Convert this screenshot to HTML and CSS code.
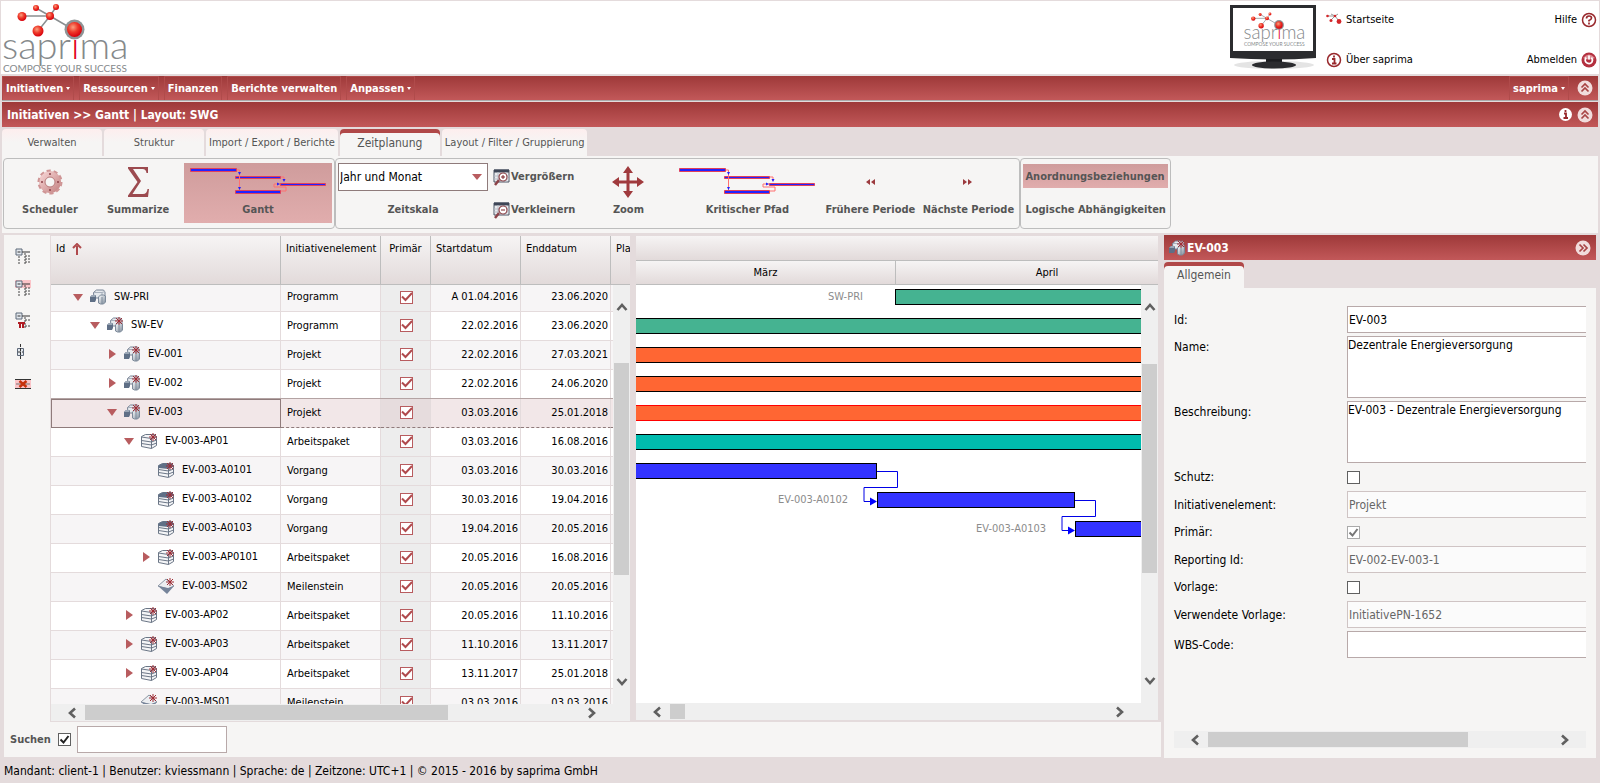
FILE: index.html
```html
<!DOCTYPE html>
<html lang="de">
<head>
<meta charset="utf-8">
<title>saprima</title>
<link rel="stylesheet" href="styles.css">
</head>
<body>
<svg class="defs" aria-hidden="true">
<defs>
<radialGradient id="ball" cx="40%" cy="35%" r="65%"><stop offset="0" stop-color="#f9a080"/><stop offset=".5" stop-color="#ee3a2a"/><stop offset="1" stop-color="#d8000c"/></radialGradient>
<linearGradient id="steel" x1="0" y1="0" x2="1" y2="1"><stop offset="0" stop-color="#fff"/><stop offset="1" stop-color="#7d8a9a"/></linearGradient>
<linearGradient id="gearfill" x1="0" y1="0" x2="1" y2="1"><stop offset="0" stop-color="#f3cfcf"/><stop offset="1" stop-color="#c98a8a"/></linearGradient>
</defs>
<symbol id="star" viewBox="0 0 8 8"><path d="M4 0v8M0 4h8M1 1l6 6M7 1L1 7" stroke="#a02c35" stroke-width="1"/></symbol>
<symbol id="cubes0" viewBox="0 0 16 16">
<path d="M3.500 3.500l3-2.500h7l1.500 2v4l-2 2H4z" fill="#e6e9ed" stroke="#768294"/><path d="M4 3.500h8l3-1M12 3.500V8" fill="none" stroke="#a8b0bc"/>
<path d="M0 8l2-2h4v5l-1 2H0z" fill="#5f6f86"/><path d="M0 8l2-2h4l-1 2z" fill="#9aa6b5"/>
<path d="M8.500 8l2-2h3l2 1v6l-2 2h-3l-2-1z" fill="url(#steel)" stroke="#7d8a9a"/><path d="M12 8v7" stroke="#7d8a9a"/>
</symbol>
<symbol id="cubes" viewBox="0 0 16 16"><use href="#cubes0" width="16" height="16"/><use href="#star" x="8" y="0" width="8" height="8"/></symbol>
<symbol id="stack" viewBox="0 0 16 16">
<path d="M.5 3.500l4-2h9l2 2v9l-5 3-10-2z" fill="#f4f5f7" stroke="#6b7686"/>
<path d="M.5 4l10 1.500 5-2M.5 7.500l10 1.500 5-2M.5 10.500l10 1.500 5-2M10.500 5.500v10" fill="none" stroke="#6b7686"/>
<use href="#star" x="8" y="0" width="8" height="8"/>
</symbol>
<symbol id="task" viewBox="0 0 16 16">
<path d="M.5 3.500l4-2h9l2 2v9l-5 3-10-2z" fill="#f4f5f7" stroke="#6b7686"/>
<path d="M.5 3.500l4-2h9l2 2v1l-5 2.500-10-1z" fill="#5f6f86"/>
<path d="M.5 7.500l10 1.500 5-2M.5 10.500l10 1.500 5-2M10.500 7v8" fill="none" stroke="#6b7686"/>
<use href="#star" x="8" y="0" width="8" height="8"/>
</symbol>
<symbol id="stone" viewBox="0 0 16 16">
<path d="M0 8l8-7 8 7-6 3z" fill="#eceef1" stroke="#8c96a4"/><path d="M0 8l10 2 6-2-7 8z" fill="#76849a"/>
<use href="#star" x="8" y="0" width="8" height="8"/>
</symbol>
<symbol id="open" viewBox="0 0 16 16"><path d="M3 5h10l-5 7z" fill="#b85c5f"/></symbol>
<symbol id="shut" viewBox="0 0 16 16"><path d="M5 3l7 5-7 5z" fill="#b85c5f"/></symbol>
<symbol id="chev" viewBox="0 0 12 12"><path d="M1.500 9L6 4l4.500 5" fill="none" stroke="#606060" stroke-width="2.600"/></symbol>
<symbol id="fold" viewBox="0 0 16 16"><circle cx="8" cy="8" r="7.500" fill="#f1dcdc"/><path d="M4.500 7.500L8 4l3.500 3.500M4.500 11.500L8 8l3.500 3.500" fill="none" stroke="#a84444" stroke-width="1.700"/></symbol>
<symbol id="chart" viewBox="0 0 136 28">
<g fill="#2222ff" stroke="#e0405a"><path d="M.5 1.500h46v3H.5zM45.500 9.500h45v2h-45zM45.500 23.500h45v3h-45zM90.500 16.500h45v2h-45z"/></g>
<path d="M47 3h2.500v20M91 10h3v4M84 20v-3h6M84 20h12v4h-5" fill="none" stroke="#ff7070"/>
<path d="M48 5h3l-1.500 3zM48 20h3l-1.500 3zM92.500 12h3L94 15zM87 15.500v3l3-1.500z" fill="#2222ff"/>
</symbol>
<symbol id="lens" viewBox="0 0 18 17">
<path d="M1 1h15v12H1z" fill="#e9ebee" stroke="#4d5666"/><path d="M1 2h15" stroke="#3e4657" stroke-width="3"/><path d="M1 7h15M1 10h15M5 3v10M9 3v10M13 3v10" stroke="#b9bec8"/>
<circle cx="10" cy="8" r="4" fill="#fff" stroke="#8c4248" stroke-width="1.200"/><path d="M6 11l-4 5" stroke="#8c4248" stroke-width="2.500"/>
</symbol>
</svg>

<div class="page">
<header class="top">
<svg class="logo" viewBox="0 0 128 72">
<g id="logo">
<path d="M21 15h28M49 15L35 7M49 15l6-9M49 15L37 30M49 15l24 14" stroke="#8a8e90" stroke-width="1.500"/>
<text x="1" y="58" class="logo-name">sapr<tspan fill="#e2001a">i</tspan>ma</text>
<text x="2" y="71" class="logo-sub">COMPOSE YOUR SUCCESS</text>
<circle cx="73.500" cy="28.500" r="10" fill="#8f9496"/><circle cx="73.500" cy="28.500" r="7.500" fill="url(#ball)"/>
<circle cx="21" cy="15.500" r="4.500" fill="url(#ball)"/><circle cx="35" cy="7" r="3" fill="url(#ball)"/><circle cx="55" cy="6" r="3" fill="url(#ball)"/>
<circle cx="49" cy="15" r="4" fill="url(#ball)"/><circle cx="37" cy="30" r="5.500" fill="url(#ball)"/>
</g>
</svg>
<svg class="screen" viewBox="0 0 90 66" aria-hidden="true">
<ellipse cx="45" cy="61" rx="40" ry="4" fill="#e4e4e4"/>
<path d="M1 1h86v53q-43 3-86 0z" fill="#2b2c2f"/><path d="M4 4h80v43H4z" fill="#fff"/>
<path d="M37 55h16v4h-16z" fill="#1c1d20"/><ellipse cx="45" cy="61" rx="22" ry="3.500" fill="#2b2c2f"/>
<use href="#logo" transform="translate(14 7) scale(.49)"/>
</svg>
<nav class="toplinks">
<a href="#"><svg width="16" height="16" viewBox="0 0 16 16"><path d="M1 4h8l4 5M9 4l3-2M9 4L5 8M9 4L5 2" stroke="#999" fill="none"/><g fill="#d3262a"><circle cx="1.500" cy="4" r="1.300"/><circle cx="9" cy="4" r="1.300"/><circle cx="5" cy="8.500" r="1.500"/><circle cx="13" cy="9.500" r="2.400"/></g></svg>Startseite</a>
<a href="#"><svg width="16" height="16" viewBox="0 0 16 16"><circle cx="8" cy="8" r="6.500" fill="#fff" stroke="#98282c" stroke-width="1.500"/><path d="M8 3.500v2M6 7h2.500v4.500M6 11.500h4.500" stroke="#98282c" stroke-width="1.800" fill="none"/></svg>Über saprima</a>
</nav>
<nav class="toplinks right">
<a href="#">Hilfe<svg width="16" height="16" viewBox="0 0 16 16"><circle cx="8" cy="8" r="6.500" fill="#fff" stroke="#98282c" stroke-width="1.500"/><path d="M5.500 6.500q0-2.500 2.500-2.500t2.500 2q0 1.500-2.500 2.500v1M8 10.500v2" stroke="#98282c" stroke-width="1.700" fill="none"/></svg></a>
<a href="#">Abmelden<svg width="16" height="16" viewBox="0 0 16 16"><circle cx="8" cy="8" r="7.500" fill="#b3303f"/><path d="M2 6q6-7 12 0-6 3-12 0z" fill="#dc8d95"/><path d="M5 5.500q-2 4 1 5.500t5-1q1-2.500-.5-4.500M8 3.500v4" stroke="#fff" stroke-width="1.700" fill="none"/></svg></a>
</nav>
</header>

<nav class="menu">
<a href="#" class="drop">Initiativen</a>
<a href="#" class="drop">Ressourcen</a>
<a href="#">Finanzen</a>
<a href="#">Berichte verwalten</a>
<a href="#" class="drop">Anpassen</a>
<a href="#" class="drop user">saprima</a>
<button class="round" aria-label="Einklappen"><svg width="16" height="16"><use href="#fold"/></svg></button>
</nav>

<div class="bar title">
<h1>Initiativen &gt;&gt; Gantt | Layout: SWG</h1>
<svg class="info" width="13" height="13" viewBox="0 0 13 13"><circle cx="6.500" cy="6.500" r="6.500" fill="#fff"/><path d="M6.500 2v2M5 5.500h2v4.500M4.500 10h4.500" stroke="#98282c" stroke-width="1.800" fill="none"/></svg>
<button class="round" aria-label="Einklappen"><svg width="16" height="16"><use href="#fold"/></svg></button>
</div>

<div class="tabs">
<a href="#" class="tab">Verwalten</a>
<a href="#" class="tab">Struktur</a>
<a href="#" class="tab wide">Import / Export / Berichte</a>
<a href="#" class="tab active">Zeitplanung</a>
<a href="#" class="tab wide">Layout / Filter / Gruppierung</a>
</div>

<div class="ribbon">
<div class="group">
<button class="tool std"><svg width="26" height="34" viewBox="0 0 26 34"><circle cx="13" cy="17" r="8" fill="none" stroke="url(#gearfill)" stroke-width="6"/><circle cx="13" cy="17" r="11.500" fill="none" stroke="#cf9595" stroke-width="2" stroke-dasharray="4.200 3"/><circle cx="13" cy="17" r="5" fill="#f6f5f4" stroke="#b87878"/><g fill="#8c4248"><circle cx="13" cy="9" r="1"/><circle cx="13" cy="25" r="1"/><circle cx="5" cy="17" r="1"/><circle cx="21" cy="17" r="1"/></g></svg>Scheduler</button>
<button class="tool std"><svg width="22" height="34" viewBox="0 0 22 34"><path d="M1 2h20v6h-1.500q-.5-4-4-4H6l8 12-8.500 13H16q4 0 4.500-5H22l-1 8H1v-1.500L10.500 17 1 3.500z" fill="#9c4a4f"/></svg>Summarize</button>
<button class="tool chart on"><svg width="136" height="34" viewBox="0 0 136 34"><use href="#chart" y="2" width="136" height="28"/></svg>Gantt</button>
</div>
<div class="group">
<div class="scale">
<select id="scale"><option>Jahr und Monat</option></select>
<label for="scale">Zeitskala</label>
</div>
<div class="pair">
<button><svg width="18" height="17"><use href="#lens"/><path d="M8 8h4M10 6v4" stroke="#7a2026"/></svg>Vergrößern</button>
<button><svg width="18" height="17"><use href="#lens"/><path d="M8 8h4" stroke="#7a2026"/></svg>Verkleinern</button>
</div>
<button class="tool zoom"><svg width="34" height="34" viewBox="0 0 34 34"><path d="M17 1l5 7h-3.500v7.500H26V12l7 5-7 5v-3.500h-7.500V26H22l-5 7-5-7h3.500v-7.500H8V22l-7-5 7-5v3.500h7.500V8H12z" fill="#a03a3d"/></svg>Zoom</button>
<button class="tool chart"><svg width="136" height="34" viewBox="0 0 136 34"><use href="#chart" y="2" width="136" height="28"/></svg>Kritischer Pfad</button>
<button class="tool step"><svg width="10" height="34" viewBox="0 0 10 34"><path d="M5 14v6l-4-3zM10 14v6l-4-3z" fill="#9c3a3e"/></svg>Frühere Periode</button>
<button class="tool step"><svg width="10" height="34" viewBox="0 0 10 34"><path d="M0 14v6l4-3zM5 14v6l4-3z" fill="#9c3a3e"/></svg>Nächste Periode</button>
</div>
<div class="group last">
<div class="pair">
<button class="on">Anordnungsbeziehungen</button>
<button>Logische Abhängigkeiten</button>
</div>
</div>
</div>

<div class="main">
<section class="work">
<div class="panes">
<div class="strip">
<button aria-label="Ebene reduzieren"><svg width="16" height="16" viewBox="0 0 16 16"><path d="M1 1h6v6H1z" fill="#e3e8ee" stroke="#5d6878"/><path d="M2.500 4h3M7 4h8" stroke="#333"/><path d="M4 8v8M10 5v11M10 8h5M10 11h5M10 14h5" stroke="#444" stroke-dasharray="2 1"/></svg></button>
<button aria-label="Ast reduzieren"><svg width="16" height="16" viewBox="0 0 16 16"><path d="M0 0h16v8H0z" fill="#fbc4c8"/><path d="M1 1h6v6H1z" fill="#e3e8ee" stroke="#5d6878"/><path d="M2.500 4h3M7 4h8" stroke="#333"/><path d="M4 8v8M10 5v11M10 8h5M10 11h5M10 14h5" stroke="#444" stroke-dasharray="2 1"/></svg></button>
<button aria-label="Ast entfernen"><svg width="16" height="16" viewBox="0 0 16 16"><path d="M1 1h6v6H1z" fill="#e3e8ee" stroke="#5d6878"/><path d="M2.500 4h3M7 4h8" stroke="#333"/><path d="M10 5v11M10 8h5M10 14h5" stroke="#444" stroke-dasharray="2 1"/><path d="M3 11h7M5 11v5M8 11v5" stroke="#b01c24" stroke-width="2"/></svg></button>
<button aria-label="Erweitern"><svg width="16" height="16" viewBox="0 0 16 16"><path d="M2.500 4.500h6v7h-6z" fill="#e3e8ee" stroke="#5d6878"/><path d="M5.500 0v16M3 8h5" stroke="#333" stroke-dasharray="3 1"/></svg></button>
<button aria-label="Zeile entfernen"><svg width="16" height="16" viewBox="0 0 16 16"><path d="M0 3h16v10H0z" fill="#fbc4c8"/><path d="M0 3.500h16M0 12.500h16" stroke="#333"/><path d="M1 8h14" stroke="#777"/><path d="M4.500 5l7 6M11.500 5l-7 6" stroke="#c6300c" stroke-width="2.500"/></svg></button>
</div>

<div class="grid">
<div class="grid-view">
<div class="grid-rows">
<table>
<colgroup><col class="c-id"><col class="c-type"><col class="c-prim"><col class="c-date"><col class="c-date"><col></colgroup>
<thead>
<tr><th>Id <svg class="sort" width="10" height="12" viewBox="0 0 10 12"><path d="M5 12V3M1 5l4-4 4 4" fill="none" stroke="#b04a4d" stroke-width="2"/></svg></th><th>Initiativenelement</th><th class="mid">Primär</th><th>Startdatum</th><th>Enddatum</th><th>Pla</th></tr>
</thead>
<tbody>
<tr><td><div class="node lv0"><svg><use href="#open"/></svg><svg><use href="#cubes0"/></svg>SW-PRI</div></td><td>Programm</td><td class="prim"><input type="checkbox" checked aria-label="Primär"></td><td class="date">A 01.04.2016</td><td class="date">23.06.2020</td><td></td></tr>
<tr><td><div class="node lv1"><svg><use href="#open"/></svg><svg><use href="#cubes"/></svg>SW-EV</div></td><td>Programm</td><td class="prim"><input type="checkbox" checked aria-label="Primär"></td><td class="date">22.02.2016</td><td class="date">23.06.2020</td><td></td></tr>
<tr><td><div class="node lv2"><svg><use href="#shut"/></svg><svg><use href="#cubes"/></svg>EV-001</div></td><td>Projekt</td><td class="prim"><input type="checkbox" checked aria-label="Primär"></td><td class="date">22.02.2016</td><td class="date">27.03.2021</td><td></td></tr>
<tr><td><div class="node lv2"><svg><use href="#shut"/></svg><svg><use href="#cubes"/></svg>EV-002</div></td><td>Projekt</td><td class="prim"><input type="checkbox" checked aria-label="Primär"></td><td class="date">22.02.2016</td><td class="date">24.06.2020</td><td></td></tr>
<tr class="selected"><td><div class="node lv2"><svg><use href="#open"/></svg><svg><use href="#cubes"/></svg>EV-003</div></td><td>Projekt</td><td class="prim"><input type="checkbox" checked aria-label="Primär"></td><td class="date">03.03.2016</td><td class="date">25.01.2018</td><td></td></tr>
<tr><td><div class="node lv3"><svg><use href="#open"/></svg><svg><use href="#stack"/></svg>EV-003-AP01</div></td><td>Arbeitspaket</td><td class="prim"><input type="checkbox" checked aria-label="Primär"></td><td class="date">03.03.2016</td><td class="date">16.08.2016</td><td></td></tr>
<tr><td><div class="node lv4"><svg></svg><svg><use href="#task"/></svg>EV-003-A0101</div></td><td>Vorgang</td><td class="prim"><input type="checkbox" checked aria-label="Primär"></td><td class="date">03.03.2016</td><td class="date">30.03.2016</td><td></td></tr>
<tr><td><div class="node lv4"><svg></svg><svg><use href="#task"/></svg>EV-003-A0102</div></td><td>Vorgang</td><td class="prim"><input type="checkbox" checked aria-label="Primär"></td><td class="date">30.03.2016</td><td class="date">19.04.2016</td><td></td></tr>
<tr><td><div class="node lv4"><svg></svg><svg><use href="#task"/></svg>EV-003-A0103</div></td><td>Vorgang</td><td class="prim"><input type="checkbox" checked aria-label="Primär"></td><td class="date">19.04.2016</td><td class="date">20.05.2016</td><td></td></tr>
<tr><td><div class="node lv4"><svg><use href="#shut"/></svg><svg><use href="#stack"/></svg>EV-003-AP0101</div></td><td>Arbeitspaket</td><td class="prim"><input type="checkbox" checked aria-label="Primär"></td><td class="date">20.05.2016</td><td class="date">16.08.2016</td><td></td></tr>
<tr><td><div class="node lv4"><svg></svg><svg><use href="#stone"/></svg>EV-003-MS02</div></td><td>Meilenstein</td><td class="prim"><input type="checkbox" checked aria-label="Primär"></td><td class="date">20.05.2016</td><td class="date">20.05.2016</td><td></td></tr>
<tr><td><div class="node lv3"><svg><use href="#shut"/></svg><svg><use href="#stack"/></svg>EV-003-AP02</div></td><td>Arbeitspaket</td><td class="prim"><input type="checkbox" checked aria-label="Primär"></td><td class="date">20.05.2016</td><td class="date">11.10.2016</td><td></td></tr>
<tr><td><div class="node lv3"><svg><use href="#shut"/></svg><svg><use href="#stack"/></svg>EV-003-AP03</div></td><td>Arbeitspaket</td><td class="prim"><input type="checkbox" checked aria-label="Primär"></td><td class="date">11.10.2016</td><td class="date">13.11.2017</td><td></td></tr>
<tr><td><div class="node lv3"><svg><use href="#shut"/></svg><svg><use href="#stack"/></svg>EV-003-AP04</div></td><td>Arbeitspaket</td><td class="prim"><input type="checkbox" checked aria-label="Primär"></td><td class="date">13.11.2017</td><td class="date">25.01.2018</td><td></td></tr>
<tr><td><div class="node lv3"><svg></svg><svg><use href="#stone"/></svg>EV-003-MS01</div></td><td>Meilenstein</td><td class="prim"><input type="checkbox" checked aria-label="Primär"></td><td class="date">03.03.2016</td><td class="date">03.03.2016</td><td></td></tr>
</tbody>
</table>
</div>
<div class="vscroll"><svg class="up"><use href="#chev"/></svg><div class="track"><div class="thumb" style="margin-top:50px;height:212px"></div></div><svg class="down"><use href="#chev"/></svg></div>
</div>
<div class="hscroll"><svg class="left"><use href="#chev"/></svg><div class="track"><div class="thumb" style="margin-left:7px;width:363px"></div></div><svg class="rightarrow"><use href="#chev"/></svg></div>
</div>

<div class="gantt">
<div class="years"></div>
<div class="months"><div class="month march">März</div><div class="month april">April</div></div>
<div class="gantt-view">
<div class="canvas">
<span class="tasklabel" style="top:4px;left:192px">SW-PRI</span>
<div class="task program" style="top:4px;left:259px;width:900px"></div>
<div class="task program" style="top:33px;left:-10px;width:1200px"></div>
<div class="task project" style="top:62px;left:-10px;width:1200px"></div>
<div class="task project" style="top:91px;left:-10px;width:1200px"></div>
<div class="task project marked" style="top:120px;left:-10px;width:1200px"></div>
<div class="task package" style="top:149px;left:-10px;width:1200px"></div>
<div class="task work-item" style="top:178px;left:-10px;width:251px"></div>
<span class="tasklabel" style="top:207px;left:142px">EV-003-A0102</span>
<div class="task work-item" style="top:207px;left:241px;width:198px"></div>
<span class="tasklabel" style="top:236px;left:340px">EV-003-A0103</span>
<div class="task work-item" style="top:236px;left:439px;width:900px"></div>
<svg class="links" width="505" height="300"><g fill="none" stroke="#0000e6"><path d="M241 186.500h20.500v16h-33.500v14h8"/><path d="M439 215.500h20.500v16h-33.500v14h8"/></g><path d="M234 212.500l7 4-7 4zM432 241.500l7 4-7 4z" fill="#0000ff"/></svg>
</div>
<div class="vscroll"><svg class="up"><use href="#chev"/></svg><div class="track"><div class="thumb" style="margin-top:51px;height:209px"></div></div><svg class="down"><use href="#chev"/></svg></div>
</div>
<div class="hscroll"><svg class="left"><use href="#chev"/></svg><div class="track"><div class="thumb" style="margin-left:7px;width:15px"></div></div><svg class="rightarrow"><use href="#chev"/></svg></div>
</div>
</div>

<div class="search">
<label for="searchon">Suchen</label>
<input type="checkbox" id="searchon" class="box" checked>
<input type="text" class="field" aria-label="Suchbegriff">
</div>
</section>

<aside class="detail">
<div class="bar">
<svg width="16" height="16"><use href="#cubes"/></svg>
<h2>EV-003</h2>
<button class="round turn" aria-label="Schließen"><svg width="16" height="16"><use href="#fold"/></svg></button>
</div>
<div class="tabs"><a href="#" class="tab active small">Allgemein</a></div>
<div class="detail-body">
<form>
<label for="f-id">Id:</label><input id="f-id" class="field" type="text" value="EV-003">
<label for="f-name" class="high">Name:</label><textarea id="f-name" class="field">Dezentrale Energieversorgung</textarea>
<label for="f-desc" class="high">Beschreibung:</label><textarea id="f-desc" class="field">EV-003 - Dezentrale Energieversorgung</textarea>
<label for="f-lock">Schutz:</label><input id="f-lock" class="box" type="checkbox">
<label for="f-type">Initiativenelement:</label><input id="f-type" class="field" type="text" value="Projekt" disabled>
<label for="f-prim">Primär:</label><input id="f-prim" class="box" type="checkbox" checked disabled>
<label for="f-rep">Reporting Id:</label><input id="f-rep" class="field" type="text" value="EV-002-EV-003-1" disabled>
<label for="f-tpl">Vorlage:</label><input id="f-tpl" class="box" type="checkbox">
<label for="f-used">Verwendete Vorlage:</label><input id="f-used" class="field" type="text" value="InitiativePN-1652" disabled>
<label for="f-wbs">WBS-Code:</label><input id="f-wbs" class="field" type="text">
</form>
<div class="hscroll"><svg class="left"><use href="#chev"/></svg><div class="track"><div class="thumb" style="margin-left:7px;width:260px"></div></div><svg class="rightarrow"><use href="#chev"/></svg></div>
</div>
</aside>
</div>

<footer>Mandant: client-1 | Benutzer: kviessmann | Sprache: de | Zeitzone: UTC+1 | © 2015 - 2016 by saprima GmbH</footer>
</div>
</body>
</html>
```
FILE: styles.css
```css
*{
box-sizing: border-box;
}
body{
margin: 0;
background: #e4dbdc;
color: #000;
font: 11px/14px "DejaVu Sans Condensed", "Noto Sans", sans-serif;
}
a{
color: inherit;
text-decoration: none;
}
button{
font: inherit;
color: inherit;
padding: 0;
border: 0;
background: none;
cursor: pointer;
}
svg{
display: block;
flex: none;
}
.defs{
position: absolute;
width: 0;
height: 0;
}
.page{
display: flex;
flex-direction: column;
height: 100vh;
min-height: 640px;
padding: 1px 2px 0;
}

/* header */
.top{
display: flex;
flex: none;
height: 73px;
background: #fff;
margin: 0 -1px 2px;
}
.logo{
width: 128px;
height: 72px;
overflow: visible;
}
.logo-name{
font: 300 38px Lato, "Liberation Sans", sans-serif;
fill: #85898b;
}
.logo-sub{
font: 10px Lato, "Liberation Sans", sans-serif;
fill: #85898b;
}
.screen{
width: 90px;
height: 66px;
margin: 3px 7px 0 auto;
}
.toplinks{
display: flex;
flex-direction: column;
gap: 24px;
width: 91px;
padding-top: 11px;
white-space: nowrap;
}
.toplinks a{
display: flex;
align-items: center;
gap: 4px;
height: 16px;
}
.toplinks.right{
width: 180px;
margin-right: 2px;
align-items: flex-end;
}

/* red bars */
.menu,
.bar{
display: flex;
align-items: center;
flex: none;
height: 25px;
background: linear-gradient(#9e3939, #c25859);
color: #fff;
font-weight: bold;
}
.menu{
gap: 5px;
border-bottom: 1px solid #aaa;
margin-bottom: 1px;
}
.menu a{
display: flex;
align-items: center;
gap: 3px;
height: 24px;
padding: 0 3px;
border: 1px solid #b04b4b;
border-width: 1px 1px 0;
}
.menu .drop::after{
content: '';
border: 2px solid transparent;
border-top: 3px solid #fff;
border-bottom: 0;
}
.menu .user{
margin-left: auto;
}
.round{
margin: 0 5px 0 3px;
}
.turn{
transform: rotate(90deg);
}
h1,
h2{
margin: 0;
font-size: 12px;
}
.title h1{
padding-left: 5px;
flex: 1;
}
.title .info{
margin-right: 2px;
}

/* tabs */
.tabs{
display: flex;
flex: none;
gap: 2px;
height: 27px;
margin-top: 2px;
}
.tab{
display: flex;
align-items: center;
justify-content: center;
width: 100px;
color: #555;
background: linear-gradient(#fdeeee, #f6f5f4 50%);
border-radius: 4px 4px 0 0;
}
.tab.wide{
width: auto;
padding: 0 3px;
}
.tab.active{
font-size: 12px;
background: #f6f5f4;
box-shadow: inset 0 4px #b04848;
}
.tab.small{
width: 80px;
}

/* ribbon */
.ribbon{
display: flex;
flex: none;
height: 77px;
padding: 2px 1px 5px;
background: #f6f5f4;
color: #555;
font-weight: bold;
}
.group{
display: flex;
align-items: flex-start;
height: 71px;
padding: 4px 2px;
border: 1px solid #bdbdbd;
border-radius: 4px;
}
.tool{
display: flex;
flex-direction: column;
align-items: center;
gap: 4px;
height: 60px;
padding-top: 2px;
white-space: nowrap;
}
.std{
width: 88px;
}
.chart{
width: 148px;
}
.std + .chart{
margin-left: 2px;
}
.zoom{
width: 90px;
}
.step{
width: 98px;
}
.on{
background: linear-gradient(#cf9c9c, #e1adad);
}
.scale{
width: 150px;
text-align: center;
}
.scale select{
display: block;
width: 150px;
height: 28px;
margin-bottom: 12px;
padding: 0 1px;
appearance: none;
font: inherit;
font-size: 12px;
font-weight: normal;
color: #000;
border: 1px solid #8f7b7b;
background: #fff url("data:image/svg+xml,%3Csvg xmlns='http://www.w3.org/2000/svg' width='10' height='6'%3E%3Cpath d='M0 0h10L5 6z' fill='%23b85c5f'/%3E%3C/svg%3E") no-repeat right 5px center;
}
.pair{
display: flex;
flex-direction: column;
gap: 9px;
padding: 1px 8px 0 5px;
}
.pair button{
display: flex;
align-items: center;
height: 24px;
padding-top: 2px;
white-space: nowrap;
}
.last .pair{
padding: 1px 0 0;
}
.last .pair button{
padding: 2px 2px 0;
}

/* main area */
.main{
display: flex;
flex: 1;
min-height: 0;
gap: 3px;
padding: 2px 2px 0;
}
.work{
display: flex;
flex-direction: column;
flex: 1;
min-width: 0;
}
.panes{
display: flex;
flex: 1;
min-height: 0;
padding-right: 3px;
}
.strip{
display: flex;
flex-direction: column;
gap: 16px;
width: 46px;
padding: 13px 0 0 11px;
background: #f6f5f4;
flex: none;
}
.grid{
display: flex;
flex-direction: column;
width: 580px;
flex: none;
padding: 1px 0 1px;
border-left: 1px solid #e4dbdc;
}
.grid-view{
display: flex;
flex: 1;
min-height: 0;
position: relative;
}
.grid-rows{
flex: 1;
overflow: hidden;
}
table{
width: 100%;
table-layout: fixed;
border-spacing: 0;
}
.c-id{
width: 230px;
}
.c-type{
width: 100px;
}
.c-prim{
width: 50px;
}
.c-date{
width: 90px;
}
th{
height: 49px;
padding: 6px 5px;
text-align: left;
vertical-align: top;
font-weight: normal;
white-space: nowrap;
background: linear-gradient(#f6f4f4, #e2dada);
border: 1px solid #bdbdbd;
border-width: 0 1px 1px 0;
}
th:last-child{
padding-right: 0;
border-right: 0;
}
th.mid{
text-align: center;
}
.sort{
display: inline-block;
vertical-align: -3px;
margin-left: 4px;
}
td{
height: 29px;
padding: 0 6px;
white-space: nowrap;
background: #fff;
border: 1px solid #e4dbdc;
border-width: 0 1px 1px 0;
}
tr:nth-child(odd) td{
background: #f7f5f6;
}
tbody tr:first-child td{
height: 27px;
padding-bottom: 2px;
}
td:first-child{
padding: 0 0 2px;
}
td.date{
text-align: right;
padding: 0 2px;
}
td.prim,
tr:nth-child(odd) td.prim{
background: #ededed;
padding: 0 0 2px 2px;
}
.node{
display: flex;
align-items: center;
height: 16px;
}
.node svg{
width: 16px;
height: 16px;
margin-right: 4px;
}
.node svg + svg{
margin-right: 8px;
}
.lv0{
padding-left: 19px;
}
.lv1{
padding-left: 36px;
}
.lv2{
padding-left: 53px;
}
.lv3{
padding-left: 70px;
}
.lv4{
padding-left: 87px;
}
tr.selected td,
tr.selected:nth-child(odd) td{
background: #f2e7e8;
border-bottom: 1px dashed #8f7b7b;
box-shadow: 0 -1px #b3a3a3;
}
tr.selected:nth-child(odd) td.prim{
background: #e6dcdd;
}
tr.selected td:first-child{
outline: 1px solid #8f7b7b;
outline-offset: -1px;
}
input[type=checkbox]{
appearance: none;
display: block;
width: 13px;
height: 13px;
margin: 0;
background: #fff;
border: 1px solid #606060;
}
td input[type=checkbox]{
margin: auto;
border-color: #b85c5f;
}
input[type=checkbox]:checked{
background: #fff url("data:image/svg+xml,%3Csvg xmlns='http://www.w3.org/2000/svg' width='11' height='11'%3E%3Cpath d='M1.500 5.500l3 3 5-6.500' fill='none' stroke='%23222' stroke-width='2'/%3E%3C/svg%3E") center no-repeat;
}
td input[type=checkbox]:checked{
background-image: url("data:image/svg+xml,%3Csvg xmlns='http://www.w3.org/2000/svg' width='11' height='11'%3E%3Cpath d='M1 4.500l3.500 3.500L11 1' fill='none' stroke='%23b04a4d' stroke-width='2'/%3E%3C/svg%3E");
}
input[type=checkbox]:disabled{
border-color: #aaa;
background-image: url("data:image/svg+xml,%3Csvg xmlns='http://www.w3.org/2000/svg' width='11' height='11'%3E%3Cpath d='M1.500 5.500l3 3 5-6.500' fill='none' stroke='%23777' stroke-width='2'/%3E%3C/svg%3E");
}

/* scrollbars */
.vscroll,
.hscroll{
display: flex;
align-items: center;
flex: none;
background: #efefef;
}
.vscroll{
flex-direction: column;
width: 17px;
}
.hscroll{
height: 17px;
}
.vscroll svg,
.hscroll svg{
width: 12px;
height: 12px;
}
.track{
flex: 1;
min-height: 0;
min-width: 0;
}
.thumb{
background: #cdcdcd;
}
.vscroll .thumb{
width: 15px;
}
.hscroll .thumb{
height: 15px;
}
/* lies over the rows, below the column heads */
.grid .vscroll{
position: absolute;
top: 49px;
right: 0;
bottom: 0;
}
.up{
margin-top: 16px;
}
.down{
transform: rotate(180deg);
margin-bottom: 16px;
}
.left{
transform: rotate(-90deg);
margin-left: 15px;
}
.rightarrow{
transform: rotate(90deg);
margin-right: 32px;
}
.detail .rightarrow{
margin-right: 15px;
}

/* gantt */
.gantt{
display: flex;
flex-direction: column;
flex: 1;
min-width: 0;
margin-left: 6px;
padding: 1px 0 2px;
}
.years,
.months{
height: 25px;
flex: none;
background: linear-gradient(#f6f4f4, #e2dada);
border-bottom: 1px solid #bdbdbd;
}
.months{
display: flex;
height: 24px;
overflow: hidden;
}
.month{
flex: none;
text-align: center;
line-height: 24px;
}
.march{
width: 260px;
border-right: 1px solid #bdbdbd;
}
.april{
width: 302px;
}
.gantt-view{
display: flex;
flex: 1;
min-height: 0;
background: #fff;
}
.canvas{
position: relative;
flex: 1;
overflow: hidden;
}
.task{
position: absolute;
height: 16px;
border: 1px solid #000;
}
.program{
background: #45b391;
}
.project{
background: #ff6633;
}
.marked{
border-color: #f00;
}
.package{
background: #00bbae;
}
.work-item{
background: #3333ff;
}
.tasklabel{
position: absolute;
line-height: 16px;
color: #8c8c8c;
}
.links{
position: absolute;
left: 0;
top: 0;
}

/* search */
.search{
display: flex;
align-items: center;
height: 35px;
padding-left: 6px;
background: #f6f5f4;
color: #555;
font-weight: bold;
flex: none;
}
.search .box{
margin: 0 6px 0 7px;
}
.search .field{
width: 150px;
border-right: 1px solid #b8a9a9;
}
.field{
width: 100%;
height: 27px;
margin: 0;
padding: 0 1px;
font: inherit;
font-size: 12px;
border: 1px solid #b8a9a9;
border-right: 0;
border-radius: 0;
background: #fff;
color: #000;
}
textarea.field{
display: block;
height: 62px;
padding: 1px 0;
resize: none;
}
.field:disabled{
background: #fbfbfb;
border-color: #cfc4c4;
color: #666;
}

/* detail */
.detail{
display: flex;
flex-direction: column;
width: 432px;
flex: none;
}
.detail .bar{
padding-left: 5px;
}
.detail h2{
flex: 1;
padding-left: 2px;
}
.detail .tabs{
height: 26px;
}
.detail-body{
display: flex;
flex-direction: column;
justify-content: space-between;
flex: 1;
min-height: 0;
padding: 18px 10px 10px;
background: #f6f5f4;
margin-bottom: -1px;
}
form{
display: grid;
grid-template-columns: 173px 1fr;
gap: 3px 0;
align-items: center;
font-size: 12px;
}
form .box{
margin: 5px 0 4px;
}
.high{
align-self: start;
padding-top: 4px;
}
footer{
flex: none;
height: 26px;
padding-left: 2px;
font-size: 12px;
line-height: 28px;
}
```
